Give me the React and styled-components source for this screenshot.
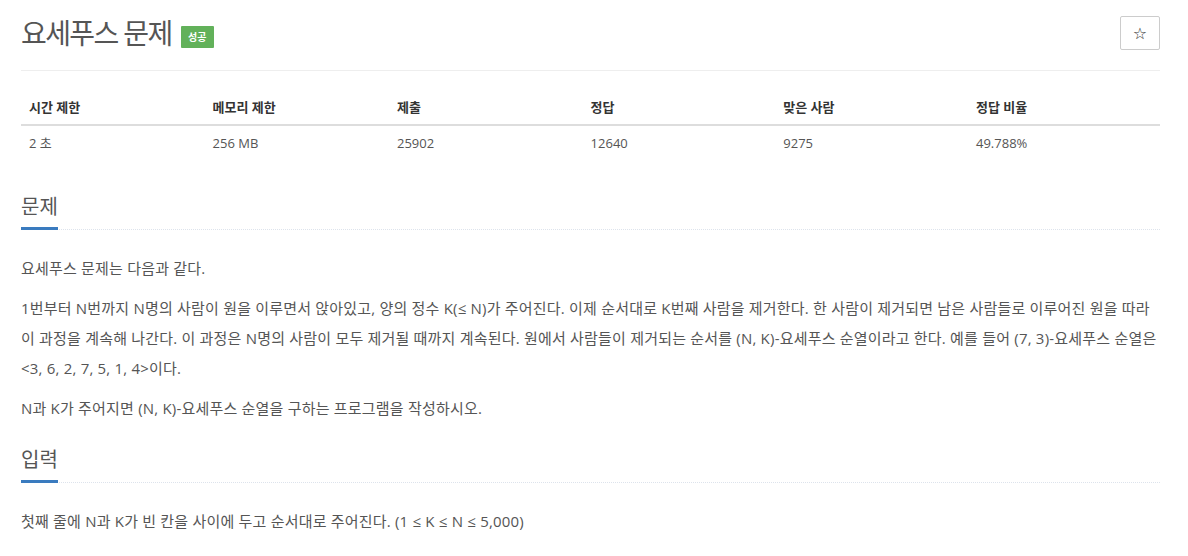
import styled, { createGlobalStyle } from "styled-components";

const GlobalStyle = createGlobalStyle`
  body {
    margin: 0;
    background: #fff;
    font-family: "Open Sans", "Noto Sans CJK KR", sans-serif;
    color: #555;
  }
`;

const Page = styled.div`
  width: 1139px;
  padding: 16px 0 0 21px;
`;

const Header = styled.div`
  display: flex;
  align-items: flex-start;
  justify-content: space-between;
  padding-bottom: 20px;
  border-bottom: 1px solid #eee;
`;

const Title = styled.h1`
  margin: 0;
  display: flex;
  align-items: center;
  gap: 9px;
  font-size: 28px;
  font-weight: 400;
  line-height: 34px;
  color: #555;
  letter-spacing: -1.6px;
`;

const Badge = styled.span`
  display: inline-flex;
  align-items: center;
  justify-content: center;
  width: 33px;
  height: 22px;
  margin-top: 8px;
  background: #62b15a;
  color: #fff;
  font-size: 10px;
  font-weight: 700;
  letter-spacing: 0;
  border-radius: 1px;
`;

const StarButton = styled.button`
  width: 40px;
  height: 34px;
  background: #fff;
  border: 1px solid #ccc;
  border-radius: 2px;
  color: #333;
  font-size: 16px;
  font-family: "DejaVu Sans", sans-serif;
  padding: 0;
  cursor: pointer;
`;

const InfoTable = styled.table`
  width: 100%;
  margin-top: 19px;
  border-collapse: collapse;
  table-layout: fixed;
  font-size: 13px;
`;

const Th = styled.th`
  text-align: left;
  font-weight: 700;
  color: #333;
  padding: 8px;
  line-height: 18px;
  border-bottom: 2px solid #ddd;
  width: ${(p) => p.$w};
`;

const Td = styled.td`
  padding: 8px;
  line-height: 18px;
  color: #555;
`;

const Section = styled.section`
  margin-top: ${(p) => p.$top};
`;

const Headline = styled.div`
  border-bottom: 1px dotted #dde3ec;
  margin-bottom: 23px;
`;

const H2 = styled.h2`
  display: inline-block;
  margin: 0 0 -1px;
  font-size: 20px;
  font-weight: 400;
  line-height: 30px;
  padding-bottom: 5px;
  color: #555;
  border-bottom: 3px solid #3a7bbf;
`;

const Paragraph = styled.p`
  margin: 0 0 10px;
  font-size: 15px;
  line-height: 30px;
  letter-spacing: 0.2px;
  color: #555;
`;

const stats = [
  ["시간 제한", "2 초", "16.07%"],
  ["메모리 제한", "256 MB", "16.15%"],
  ["제출", "25902", "17.03%"],
  ["정답", "12640", "16.94%"],
  ["맞은 사람", "9275", "16.94%"],
  ["정답 비율", "49.788%", "16.87%"],
];

export default function App() {
  return (
    <>
      <GlobalStyle />
      <Page>
        <Header>
          <Title>
            요세푸스 문제
            <Badge>성공</Badge>
          </Title>
          <StarButton aria-label="즐겨찾기">☆</StarButton>
        </Header>

        <InfoTable>
          <thead>
            <tr>
              {stats.map(([h, , w]) => (
                <Th key={h} $w={w}>
                  {h}
                </Th>
              ))}
            </tr>
          </thead>
          <tbody>
            <tr>
              {stats.map(([h, v]) => (
                <Td key={h}>{v}</Td>
              ))}
            </tr>
          </tbody>
        </InfoTable>

        <Section $top="32px">
          <Headline>
            <H2>문제</H2>
          </Headline>
          <Paragraph>요세푸스 문제는 다음과 같다.</Paragraph>
          <Paragraph>
            1번부터 N번까지 N명의 사람이 원을 이루면서 앉아있고, 양의 정수 K(≤ N)가
            주어진다. 이제 순서대로 K번째 사람을 제거한다. 한 사람이 제거되면 남은
            사람들로 이루어진 원을 따라 이 과정을 계속해 나간다. 이 과정은 N명의
            사람이 모두 제거될 때까지 계속된다. 원에서 사람들이 제거되는 순서를 (N,
            K)-요세푸스 순열이라고 한다. 예를 들어 (7, 3)-요세푸스 순열은 &lt;3, 6, 2,
            7, 5, 1, 4&gt;이다.
          </Paragraph>
          <Paragraph>N과 K가 주어지면 (N, K)-요세푸스 순열을 구하는 프로그램을 작성하시오.</Paragraph>
        </Section>

        <Section $top="22px">
          <Headline>
            <H2>입력</H2>
          </Headline>
          <Paragraph>
            첫째 줄에 N과 K가 빈 칸을 사이에 두고 순서대로 주어진다. (1 ≤ K ≤ N ≤ 5,000)
          </Paragraph>
        </Section>
      </Page>
    </>
  );
}
